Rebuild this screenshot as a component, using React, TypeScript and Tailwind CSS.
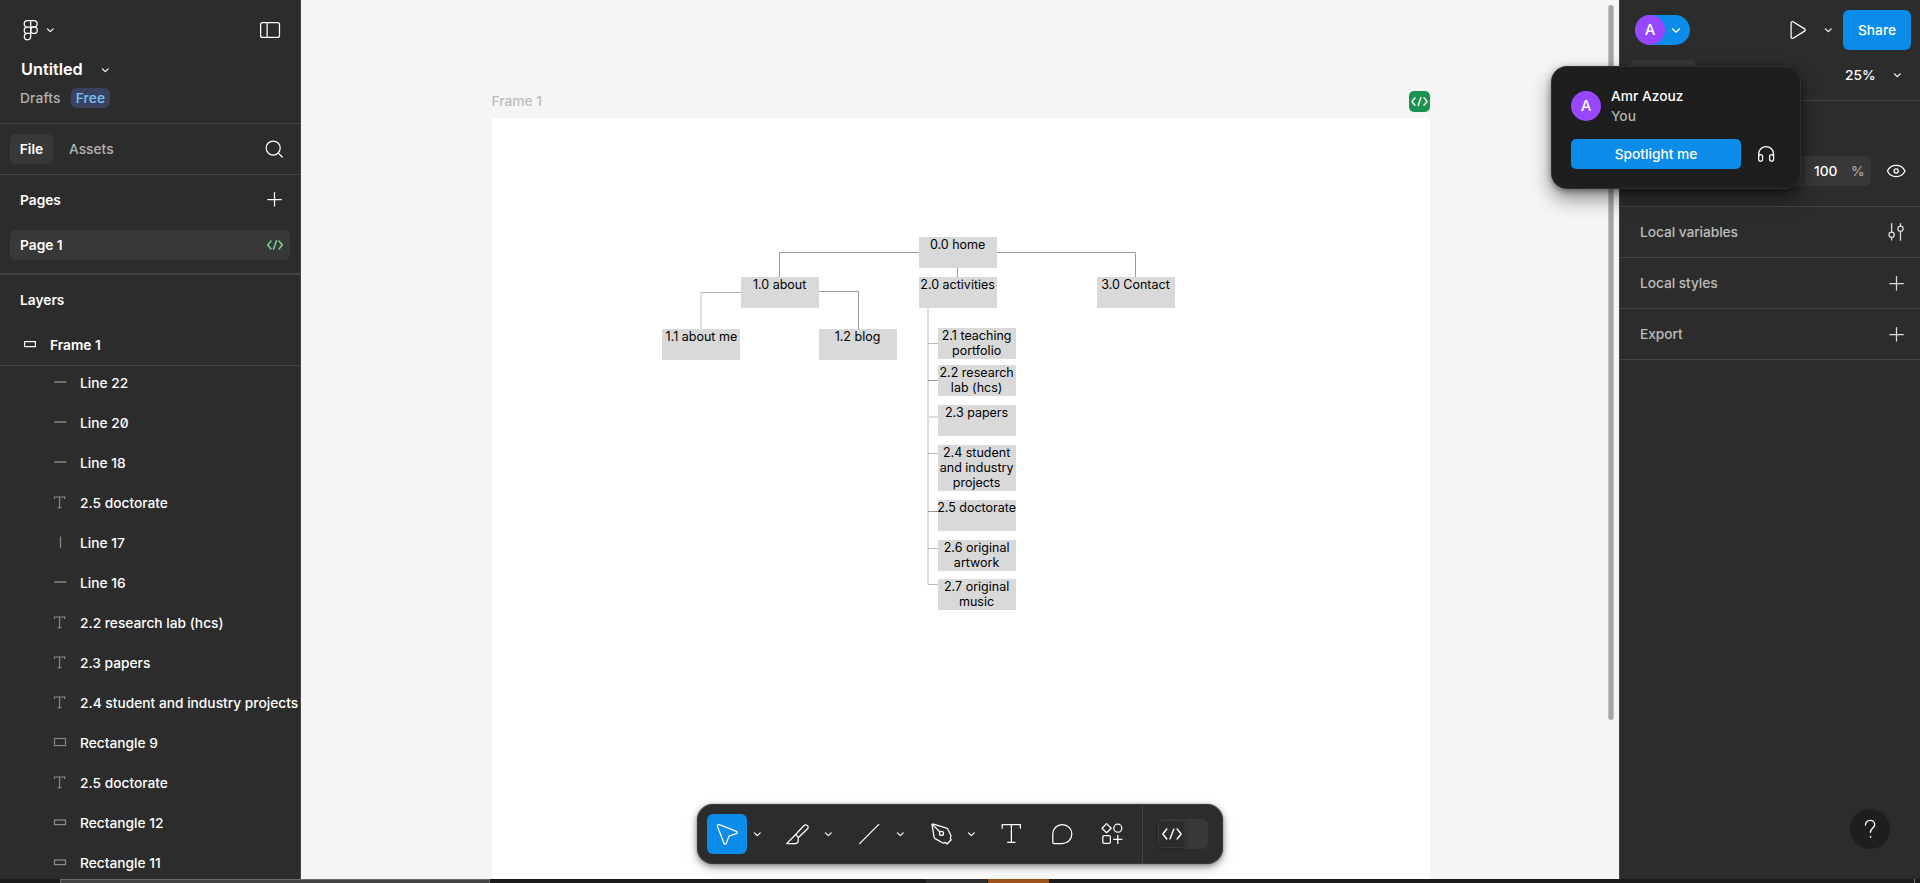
import type { ReactNode } from "react";

function Icon({ size = 30, className = "", children }: { size?: number; className?: string; children: ReactNode }) {
  return (
    <svg
      width={size}
      height={size}
      viewBox={`0 0 ${size} ${size}`}
      fill="none"
      stroke="currentColor"
      strokeWidth={1.25}
      strokeLinecap="round"
      strokeLinejoin="round"
      className={`block shrink-0 ${className}`}
    >
      {children}
    </svg>
  );
}

const Chevron = ({ className = "" }: { className?: string }) => (
  <Icon size={10} className={className}>
    <path d="M2.4 3.9 5.300 6.6 8.200 3.9" />
  </Icon>
);

const Plus = ({ className = "" }: { className?: string }) => (
  <Icon className={className}>
    <path d="M15.500 8.500v13.500M8.800 15.500h13.500" />
  </Icon>
);

const LogoIcon = () => (
  <Icon>
    <path d="M14.7 5.6h-3.3a3.2 3.2 0 0 0 0 6.4h3.3zM14.7 5.6H18a3.2 3.2 0 0 1 0 6.4h-3.3zM14.7 12h-3.3a3.2 3.2 0 0 0 0 6.4h3.3zM14.7 18.4h-3.3a3.2 3.2 0 1 0 3.3 3.2z" />
    <circle cx="18" cy="15.2" r="3.25" />
  </Icon>
);

const PanelIcon = () => (
  <Icon>
    <rect x="5.6" y="7.6" width="18.9" height="14.8" rx="2" />
    <path d="M12.1 8v14" />
  </Icon>
);

const SearchIcon = () => (
  <Icon>
    <circle cx="14.2" cy="14" r="7" />
    <path d="m19.3 19.100 3.900 3.900" />
  </Icon>
);

const CodeIcon = () => (
  <svg width="30" height="30" viewBox="0 0 30 30" fill="none" stroke="currentColor" strokeWidth={1.5} strokeLinecap="round" strokeLinejoin="round" className="block shrink-0">
    <path d="m11 11-3.300 4 3.300 4M19 11l3.300 4-3.300 4M16.500 10.8l-3 8.4" />
  </svg>
);

type LayerKind = "line" | "vline" | "text" | "rect" | "flat";

function LayerIcon({ kind }: { kind: LayerKind }) {
  return (
    <svg width="20" height="20" viewBox="0 0 20 20" fill="none" stroke="#8c8c8c" className="block shrink-0">
      {kind === "line" && <path d="M4.3 9h12" strokeWidth="1.4" />}
      {kind === "vline" && <path d="M10.5 3.5v11.5" strokeWidth="1.2" />}
      {kind === "text" && <path d="M4.5 6V4h10.2v2M9.6 4v10.7M7.4 14.7h4.4" strokeWidth="1.1" />}
      {kind === "rect" && <rect x="4.5" y="5.5" width="11" height="7" strokeWidth="1.1" />}
      {kind === "flat" && <rect x="4.5" y="7" width="11" height="4.6" strokeWidth="1.2" />}
    </svg>
  );
}

const layers: { kind: LayerKind; name: string }[] = [
  { kind: "line", name: "Line 22" },
  { kind: "line", name: "Line 20" },
  { kind: "line", name: "Line 18" },
  { kind: "text", name: "2.5 doctorate" },
  { kind: "vline", name: "Line 17" },
  { kind: "line", name: "Line 16" },
  { kind: "text", name: "2.2 research lab (hcs)" },
  { kind: "text", name: "2.3 papers" },
  { kind: "text", name: "2.4 student and industry projects" },
  { kind: "rect", name: "Rectangle 9" },
  { kind: "text", name: "2.5 doctorate" },
  { kind: "flat", name: "Rectangle 12" },
  { kind: "flat", name: "Rectangle 11" },
];

function LeftPanel() {
  return (
    <aside className="flex w-[301px] shrink-0 flex-col overflow-hidden border-r border-[#444] bg-[#2c2c2c] text-white">
      <div className="flex h-[123px] shrink-0 flex-col">
        <div className="mt-[15px] flex h-[30px] items-center pl-4 pr-[15px]">
          <LogoIcon />
          <Chevron className="-ml-[1px]" />
          <span className="ml-auto">
            <PanelIcon />
          </span>
        </div>
        <div className="mt-[10px] flex h-[30px] items-center pl-[21px] text-[16.25px] font-[600]">
          <span className="-mt-[2px] w-[79px]">Untitled</span>
          <Chevron />
        </div>
        <div className="mt-[3px] flex h-5 items-center pl-5">
          <span className="w-[51px] tracking-[0.01em] text-[#b3b3b3]">Drafts</span>
          <span className="flex h-5 w-[39px] items-center justify-center rounded-[6px] bg-[#394360] tracking-[0.01em] text-[#7cc4f8]">Free</span>
        </div>
      </div>

      <div className="flex h-[52px] shrink-0 items-center border-y border-[#444] pl-[10px] pr-[11px]">
        <span className="flex h-[30px] w-[43px] items-center justify-center rounded-[6px] bg-[#383838] font-[600]">File</span>
        <span className="ml-4 text-[#b3b3b3]">Assets</span>
        <span className="-mt-[1px] ml-auto">
          <SearchIcon />
        </span>
      </div>

      <div className="flex h-[98px] shrink-0 flex-col">
        <div className="mt-[10px] flex h-[30px] items-center justify-between pl-5 pr-[11px] font-[600]">
          <span>Pages</span>
          <Plus className="-mt-[2px]" />
        </div>
        <div className="mx-[10px] mt-[15px] flex h-[30px] items-center justify-between rounded-[6px] bg-[#383838] pl-[10px] font-[600]">
          <span>Page 1</span>
          <span className="text-[#79d297]">
            <CodeIcon />
          </span>
        </div>
      </div>

      <div className="flex h-[93px] shrink-0 flex-col border-b border-t-2 border-[#444] font-[600]">
        <div className="mt-[10px] flex h-[30px] items-center pl-5">Layers</div>
        <div className="mt-[15px] flex h-[30px] items-center pl-5">
          <svg width="20" height="20" viewBox="0 0 20 20" fill="none" stroke="#fff" strokeWidth="1.2" className="mr-[10px]">
            <rect x="4.6" y="6.6" width="10.8" height="5" />
          </svg>
          Frame 1
        </div>
      </div>

      <div className="-mt-[3px] flex shrink-0 flex-col">
        {layers.map((layer, i) => (
          <div key={i} className="flex h-10 shrink-0 items-center whitespace-nowrap pl-[50px] [font-feature-settings:'zero']">
            <LayerIcon kind={layer.kind} />
            <span className="ml-[10px]">{layer.name}</span>
          </div>
        ))}
      </div>
    </aside>
  );
}

/* Node geometry is given in the artboard's own pixels. */
const nodes: { x: number; y: number; h?: number; lines: string[] }[] = [
  { x: 426.6, y: 119, h: 31, lines: ["0.0 home"] },
  { x: 248.6, y: 158.6, lines: ["1.0 about"] },
  { x: 426.6, y: 158.6, lines: ["2.0 activities"] },
  { x: 604.5, y: 158.6, lines: ["3.0 Contact"] },
  { x: 170.4, y: 210.6, lines: ["1.1 about me"] },
  { x: 326.5, y: 210.6, lines: ["1.2 blog"] },
  { x: 445.6, y: 209.6, lines: ["2.1 teaching", "portfolio"] },
  { x: 445.6, y: 247, lines: ["2.2 research", "lab (hcs)"] },
  { x: 445.6, y: 286.6, lines: ["2.3 papers"] },
  { x: 445.6, y: 326.6, h: 46.4, lines: ["2.4 student", "and industry", "projects"] },
  { x: 445.6, y: 381.6, lines: ["2.5 doctorate"] },
  { x: 445.6, y: 421.6, lines: ["2.6 original", "artwork"] },
  { x: 445.6, y: 461, h: 31, lines: ["2.7 original", "music"] },
];

function Artboard() {
  return (
    <div className="absolute left-[191px] top-[118px] h-[761px] w-[938px] bg-white">
      <svg width="938" height="761" className="absolute left-0 top-0" fill="none">
        <path d="M427 134.5H287.5V159M505 134.5H643.5V159M465.5 149v10M326 173.5h40.5V211" stroke="#999" />
        <path d="M249 174.5h-39" stroke="#aaa" />
        <path d="M209.2 174v37" stroke="#ddd" strokeWidth="2" />
        <path d="M436 189v277.5" stroke="#ddd" strokeWidth="2" />
        <path d="M436 225.5h10M436 335.5h10M436 430.5h10M436 466.5h10" stroke="#bbb" />
        <path d="M436 262.5h10M436 393.5h10" stroke="#999" />
        <path d="M436 299h10" stroke="#ddd" strokeWidth="2" />
      </svg>
      {nodes.map((n) => (
        <div
          key={n.lines[0]}
          className="absolute flex w-[78px] flex-col items-center bg-[#d9d9d9] text-[12.5px] font-normal leading-[15px] text-black"
          style={{ left: n.x, top: n.y, height: n.h ?? 31 }}
        >
          {n.lines.map((line) => (
            <span key={line} className="whitespace-nowrap">
              {line}
            </span>
          ))}
        </div>
      ))}
    </div>
  );
}

function Toolbar() {
  return (
    <div className="absolute left-[396px] top-[804px] flex h-[60px] w-[526px] items-center rounded-[16px] bg-[#2c2c2c] pl-[10px] text-white shadow-[0_0_1px_rgba(0,0,0,0.6),0_2px_6px_rgba(0,0,0,0.45),0_6px_14px_rgba(0,0,0,0.12),inset_0_0_1px_1px_rgba(255,255,255,0.08)]">
      <span className="flex size-10 items-center justify-center rounded-[6px] bg-[#0c8ce9]">
        <Icon size={40}>
          <path d="M10.4 12.3 17 29.2c.4 1.1 1.9 1.1 2.3 0l2.3-6.2c.2-.5.6-.9 1.1-1.1l6.7-2.2c1.1-.4 1.1-1.9 0-2.4L12.3 10.6c-1.1-.5-2.3.6-1.9 1.7Z" />
        </Icon>
      </span>
      <Chevron className="ml-[5px]" />
      <Icon size={40} className="ml-4">
        <path d="M8.6 29.6h8.6c1 0 1.8-.4 2.4-1.1l.6-.8v-4.6l-2.5-2.6-9.1 9.1ZM17.7 20.5 25.5 12c1.1-1.2 2.7-1.4 3.8-.6 1.1 1 1.1 2.5 0 3.6l-9.1 8.7" />
      </Icon>
      <Chevron className="ml-[5px]" />
      <Icon size={40} className="ml-[16px]">
        <path d="M10.600 29.6 29.800 10.4" />
      </Icon>
      <Chevron className="ml-[6px]" />
      <Icon size={40} className="ml-[17px]">
        <path d="m10 10.7 2.1 12.4c.1.6.5 1.2 1 1.5l7.4 4.2c.5.3 1.1.3 1.6.1l1.4-.5 1.5 1.6 4.2-4.2-1-1.6.6-1.6c.2-.5.2-1 0-1.4l-2.9-6c-.2-.5-.7-.9-1.3-1L11.400 10.1c-.8-.2-1.5 0-1.4.6Z" />
        <path d="m10.600 10.6 7.4 7.4" />
        <circle cx="19.5" cy="19.4" r="2" />
      </Icon>
      <Chevron className="ml-[4px]" />
      <Icon size={40} className="ml-[15px]">
        <path d="M11.200 14.2v-3.6h18.2v3.6M20.400 10.6v17.6M16.600 28.3h7.4" />
      </Icon>
      <Icon size={40} className="ml-[11px]">
        <path d="M20.400 10.6a9.4 9.4 0 1 1 0 18.9h-8.3c-.8 0-1.3-.6-1.3-1.3V20A9.4 9.4 0 0 1 20.400 10.6Z" />
      </Icon>
      <Icon size={40} className="ml-[10px]">
        <path d="m14.6 9.6 4.6 4.6-4.6 4.6L10 14.2ZM25.8 21.3v8.2M21.7 25.4h8.2" />
        <circle cx="25.8" cy="14.2" r="4" />
        <rect x="10.8" y="21.6" width="7.6" height="7.8" rx="1.4" />
      </Icon>
      <span className="ml-[10px] h-[58px] w-px bg-[#444]" />
      <span className="ml-[15px] flex h-[30px] w-[50px] items-center rounded-[6px] bg-[#383838]">
        <span className="flex h-7 w-[28px] items-center justify-center rounded-[5px] border border-[#3c3c3c] bg-[#2c2c2c] shadow-[0_1px_3px_rgba(0,0,0,0.35)]">
          <Icon size={30} className="-mx-2">
            <path d="m9.800 10-4 5 4 5M20.100 10l4 5-4 5M16.800 10.2l-3.8 9.6" strokeWidth="1.4" />
          </Icon>
        </span>
      </span>
    </div>
  );
}

function Canvas() {
  return (
    <main className="relative min-w-0 flex-1 overflow-hidden bg-[#f5f5f5]">
      <span className="absolute left-[190.5px] top-[91px] leading-5 text-[#bdbdbd]">Frame 1</span>
      <span className="absolute left-[1108px] top-[91px] flex h-[21px] w-[21px] items-center justify-center rounded-[5px] bg-[#1a9350] text-white">
        <svg width="21" height="21" viewBox="0 0 21 21" fill="none" stroke="currentColor" strokeWidth="1.4" strokeLinecap="round" strokeLinejoin="round">
          <path d="M6 6.7 2.9 10.5 6 14.3M15 6.7l3.1 3.8-3.1 3.8M11.9 6.5 9.2 14.5" />
        </svg>
      </span>
      <Artboard />
      <span className="absolute left-[1307px] top-[5px] h-[715px] w-[6px] rounded-full border-x border-[#c4c4c4] bg-[#a5a5a5]" />
      <Toolbar />
    </main>
  );
}

function Section({ title, children }: { title: string; children: ReactNode }) {
  return (
    <div className="flex h-[51px] shrink-0 items-center justify-between border-b border-[#444] pl-5 pr-[9px] font-[550] text-[#bdbdbd]">
      <span className="tracking-[-0.005em]">{title}</span>
      {children}
    </div>
  );
}

function RightPanel() {
  return (
    <aside className="flex w-[301px] shrink-0 flex-col border-l border-[#444] bg-[#2c2c2c] text-white">
      <div className="flex h-[60px] shrink-0 items-center pl-[15px] pr-[9px]">
        <span className="flex h-[30px] w-[55px] items-center rounded-full bg-[#0c8ce9]">
          <span className="flex size-[30px] items-center justify-center rounded-full bg-[#9747ff] text-[15px]">A</span>
          <svg width="10" height="10" viewBox="0 0 10 10" fill="none" stroke="#fff" strokeWidth="1.25" strokeLinecap="round" strokeLinejoin="round" className="ml-[6px]">
            <path d="M1.4 3.8 5 7.2 8.6 3.8" />
          </svg>
        </span>
        <Icon className="ml-auto">
          <path d="M8.1 7.8v14.4c0 1 1.1 1.6 2 1.1l11.5-7.2c.8-.5.8-1.7 0-2.2L10.1 6.7c-.9-.5-2 .1-2 1.1Z" />
        </Icon>
        <Chevron className="ml-[10px]" />
        <span className="ml-[10px] flex h-10 w-[68px] items-center justify-center rounded-[6px] bg-[#0c8ce9] font-[550]">Share</span>
      </div>
      <div className="flex h-[41px] shrink-0 items-start border-b border-[#444] pl-[10px] pr-[18px]">
        <span className="h-[30px] w-[66px] rounded-[6px] bg-[#383838]" />
        <span className="ml-auto flex h-[30px] items-center font-[500]">
          <span className="w-[46px] -indent-[1px]">25%</span>
          <Chevron />
        </span>
      </div>
      <div className="flex h-[106px] shrink-0 items-end border-b border-[#444] pb-5 pl-5 pr-[9px]">
        <span className="flex h-[30px] w-[231px] items-center justify-end rounded-[6px] bg-[#383838]">
          <span className="h-full w-px bg-[#2c2c2c]" />
          <span className="w-[48px] pl-[10px] font-[500]">100</span>
          <span className="w-[19px] -indent-[1px] text-[#a8a8a8]">%</span>
        </span>
        <Icon className="ml-auto">
          <path d="M6.4 15c1.7-3.5 5-5.6 8.8-5.6S22.3 11.5 24 15c-1.7 3.5-5 5.6-8.8 5.6S8.1 18.5 6.4 15Z" />
          <circle cx="15.2" cy="15" r="2.1" />
        </Icon>
      </div>
      <Section title="Local variables">
        <Icon className="text-[#dcdcdc]">
          <path d="M10.6 6.500v8.700M10.6 20.500v2.500M19.5 6.500v2.500M19.5 14.500v8.700" />
          <circle cx="10.6" cy="17.8" r="2.6" />
          <circle cx="19.5" cy="11.8" r="2.6" />
        </Icon>
      </Section>
      <Section title="Local styles">
        <Plus className="-mt-[1px] text-[#dcdcdc]" />
      </Section>
      <Section title="Export">
        <Plus className="-mt-[1px] text-[#dcdcdc]" />
      </Section>
      <div className="flex flex-1 items-end justify-end pb-[30px] pr-[30px]">
        <span className="flex size-10 items-center justify-center rounded-full bg-[#1e1e1e]">
          <Icon size={40}>
            <path d="M15.500 16.100c0-2.700 1.900-4.700 4.600-4.700s4.600 1.900 4.600 4.300c0 3.300-4.300 3.500-4.300 7.600" strokeWidth="1.35" />
            <circle cx="20.4" cy="27.9" r=".5" fill="currentColor" strokeWidth="0.7" />
          </Icon>
        </span>
      </div>
    </aside>
  );
}

function UserPopover() {
  return (
    <div className="absolute left-[1551px] top-[66px] flex h-[123px] w-[250px] flex-col rounded-[16px] bg-[#1e1e1e] px-5 pt-[20px] text-white shadow-[0_2px_6px_rgba(0,0,0,0.4),0_10px_20px_rgba(0,0,0,0.42),inset_0_0_1px_0.5px_rgba(255,255,255,0.15)]">
      <div className="flex items-center">
        <span className="flex size-[30px] items-center justify-center rounded-full bg-[#9747ff] text-[15px]">A</span>
        <div className="ml-[10px] leading-5">
          <div className="font-[500]">Amr Azouz</div>
          <div className="text-[#b3b3b3]">You</div>
        </div>
      </div>
      <div className="mt-[13px] flex items-center">
        <span className="flex h-[30px] w-[170px] items-center justify-center rounded-[5px] bg-[#0c8ce9] font-[550]">Spotlight me</span>
        <Icon className="ml-[10px]">
          <path d="M7.6 20.2V15a7.5 7.5 0 0 1 15 0v5.2M7.6 18.200c0-1.500.6-2.700 2-2.700s2 .8 2 2v2.400c0 1.300-.7 2.200-2 2.200s-2-.9-2-2.200M22.600 18.200c0-1.500-.6-2.700-2-2.700s-2 .8-2 2v2.400c0 1.300.7 2.200 2 2.200s2-.9 2-2.200" />
        </Icon>
      </div>
    </div>
  );
}

function BottomStrip() {
  return (
    <div className="flex h-1 shrink-0 bg-[#1c1b1c]">
      <span className="ml-[60px] h-1 w-[430px] border border-b-0 border-[#6a6a6a] bg-[#444]" />
      <span className="ml-[436px] h-1 w-[61px] bg-[#303030]" />
      <span className="ml-[1px] h-1 w-[61px] bg-[#9c5218]" />
      <span className="ml-auto mr-[5px] h-1 w-px bg-[#777]" />
    </div>
  );
}

export default function App() {
  return (
    <div className="relative flex h-[883px] w-[1920px] flex-col overflow-hidden text-[13.75px] font-[450] leading-5 [font-family:Inter,'Liberation_Sans',sans-serif]">
      <div className="flex h-[879px] shrink-0">
        <LeftPanel />
        <Canvas />
        <RightPanel />
      </div>
      <BottomStrip />
      <UserPopover />
    </div>
  );
}
